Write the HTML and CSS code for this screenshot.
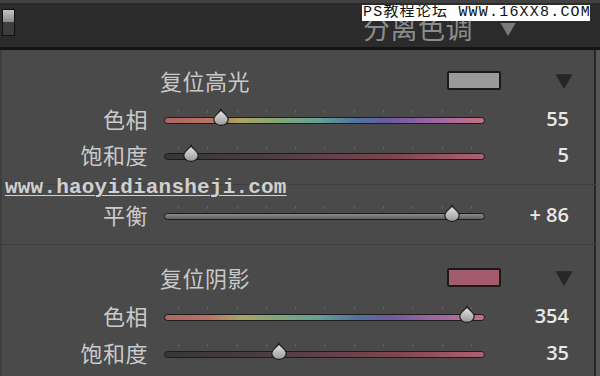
FILE: index.html
```html
<!DOCTYPE html>
<html lang="zh">
<head>
<meta charset="utf-8">
<link rel="stylesheet" href="styles.css">
</head>
<body>
<div class="frame">
  <header class="hdr">
    <div class="grip"><span class="grip-top"></span><span class="grip-bot"></span></div>
    <div class="hdr-fill"></div>
    <div class="hdr-title">分离色调</div>
    <div class="hdr-tri">▼</div>
    <div class="wm-box">PS教程论坛 WWW.16XX8.COM</div>
  </header>
  <main class="panel">
    <section class="sec sec-hi">
      <div class="sec-head">
        <span class="sec-name">复位高光</span>
        <span class="swatch swatch-hi"></span>
        <span class="sec-tri">▼</span>
      </div>
      <div class="row">
        <span class="lbl">色相</span>
        <div class="track-wrap">
          <div class="ticks"><i></i><i></i><i></i><i></i><i></i><i></i><i></i><i></i><i></i><i></i><i></i></div>
          <div class="track hue"></div>
          <svg class="thumb" style="left:17.8%" viewBox="0 0 18 18" width="18" height="18"><defs><linearGradient id="tg1" x1="0" y1="0" x2="0" y2="1"><stop offset="0" stop-color="#e8e8e8"/><stop offset="1" stop-color="#9a9a9a"/></linearGradient></defs><path d="M9 1.5 C10 4.5 16.2 7 16.2 11.5 A7.2 5.8 0 0 1 1.8 11.5 C1.8 7 8 4.5 9 1.5Z" fill="url(#tg1)" stroke="#1e1e1e" stroke-width="1.2"/></svg>
        </div>
        <span class="val">55</span>
      </div>
      <div class="row">
        <span class="lbl">饱和度</span>
        <div class="track-wrap">
          <div class="ticks"><i></i><i></i><i></i><i></i><i></i><i></i><i></i><i></i><i></i><i></i><i></i></div>
          <div class="track sat"></div>
          <svg class="thumb" style="left:8.4%" viewBox="0 0 18 18" width="18" height="18"><path d="M9 1.5 C10 4.5 16.2 7 16.2 11.5 A7.2 5.8 0 0 1 1.8 11.5 C1.8 7 8 4.5 9 1.5Z" fill="url(#tg1)" stroke="#1e1e1e" stroke-width="1.2"/></svg>
        </div>
        <span class="val">5</span>
      </div>
    </section>
    <section class="sec sec-bal">
      <div class="row">
        <span class="lbl">平衡</span>
        <div class="track-wrap">
          <div class="ticks"><i></i><i></i><i></i><i></i><i></i><i></i><i></i><i></i><i></i><i></i><i></i></div>
          <div class="track bal"></div>
          <svg class="thumb" style="left:89.7%" viewBox="0 0 18 18" width="18" height="18"><path d="M9 1.5 C10 4.5 16.2 7 16.2 11.5 A7.2 5.8 0 0 1 1.8 11.5 C1.8 7 8 4.5 9 1.5Z" fill="url(#tg1)" stroke="#1e1e1e" stroke-width="1.2"/></svg>
        </div>
        <span class="val">+ 86</span>
      </div>
    </section>
    <section class="sec sec-sh">
      <div class="sec-head">
        <span class="sec-name">复位阴影</span>
        <span class="swatch swatch-sh"></span>
        <span class="sec-tri">▼</span>
      </div>
      <div class="row">
        <span class="lbl">色相</span>
        <div class="track-wrap">
          <div class="ticks"><i></i><i></i><i></i><i></i><i></i><i></i><i></i><i></i><i></i><i></i><i></i></div>
          <div class="track hue"></div>
          <svg class="thumb" style="left:94.4%" viewBox="0 0 18 18" width="18" height="18"><path d="M9 1.5 C10 4.5 16.2 7 16.2 11.5 A7.2 5.8 0 0 1 1.8 11.5 C1.8 7 8 4.5 9 1.5Z" fill="url(#tg1)" stroke="#1e1e1e" stroke-width="1.2"/></svg>
        </div>
        <span class="val">354</span>
      </div>
      <div class="row">
        <span class="lbl">饱和度</span>
        <div class="track-wrap">
          <div class="ticks"><i></i><i></i><i></i><i></i><i></i><i></i><i></i><i></i><i></i><i></i><i></i></div>
          <div class="track sat"></div>
          <svg class="thumb" style="left:35.9%" viewBox="0 0 18 18" width="18" height="18"><path d="M9 1.5 C10 4.5 16.2 7 16.2 11.5 A7.2 5.8 0 0 1 1.8 11.5 C1.8 7 8 4.5 9 1.5Z" fill="url(#tg1)" stroke="#1e1e1e" stroke-width="1.2"/></svg>
        </div>
        <span class="val">35</span>
      </div>
    </section>
    <div class="wm-site">www.haoyidiansheji.com</div>
  </main>
</div>
</body>
</html>
```
FILE: styles.css
```css
* { box-sizing: border-box; }
html, body { margin: 0; padding: 0; }
body {
  width: 600px;
  height: 376px;
  overflow: hidden;
  background: #4a4a4a;
  font-family: "Noto Sans CJK SC", "Noto Sans", sans-serif;
}
.frame { width: 600px; height: 376px; display: flex; flex-direction: column; }

.hdr {
  position: relative;
  height: 50px;
  flex: none;
  background: #2b2b2b;
  border-top: 3px solid #414141;
  border-bottom: 3px solid #141414;
  display: flex;
  align-items: center;
  padding-left: 2px;
}
.grip {
  width: 13px;
  height: 27px;
  margin-top: -6px;
  border: 1px solid #111;
  display: flex;
  flex-direction: column;
}
.grip-top { flex: 1; background: linear-gradient(#c4c4c4, #8a8a8a); }
.grip-bot { flex: 1; background: #3e3e3e; }
.hdr-fill { flex: 1; }
.hdr-title {
  color: #8c8c8c;
  font-size: 27px;
  line-height: 30px;
  letter-spacing: 0.5px;
  margin-top: 6px;
}
.hdr-tri {
  color: #7a7a7a;
  font-size: 16px;
  margin: 6px 84px 0 27px;
}
.wm-box {
  position: absolute;
  left: 362px;
  top: 2px;
  width: 228px;
  height: 16px;
  background: #fff;
  color: #111;
  font-family: "Liberation Mono", "Noto Sans CJK SC", monospace;
  font-size: 15px;
  line-height: 16px;
  letter-spacing: 1.2px;
  padding-left: 1px;
  white-space: nowrap;
  overflow: hidden;
}

.panel {
  position: relative;
  flex: 1;
  background: #4a4a4a;
  border-left: 2px solid #3f3f3f;
  border-right: 4px solid #555;
  box-shadow: inset -2px 0 0 #262626;
}
.sec { display: flex; flex-direction: column; border-bottom: 1px solid #3f3f3f; }
.sec-hi { height: 135px; padding-top: 14px; }
.sec-bal { height: 60px; padding-top: 11px; }
.sec-sh { padding-top: 16px; border-bottom: none; }

.sec-head {
  height: 32px;
  display: flex;
  align-items: center;
  margin-bottom: 4px;
}
.sec-sh .sec-head { margin-bottom: 4px; }
.sec-name {
  margin-left: 158px;
  width: 287px;
  color: #c9c9c9;
  font-size: 22px;
  letter-spacing: 0.5px;
}
.swatch {
  width: 54px;
  height: 19px;
  border: 2px solid #1a1a1a;
  border-radius: 2px;
}
.swatch-hi { background: #9a9a9a; }
.swatch-sh { background: #a45c6c; }
.sec-tri {
  margin-left: 54px;
  color: #262626;
  font-size: 18px;
}

.row {
  height: 36px;
  display: flex;
  align-items: center;
}
.sec-sh .row:last-child { margin-top: 1px; }
.lbl {
  width: 146px;
  text-align: right;
  color: #cacaca;
  font-size: 22px;
  letter-spacing: 0.5px;
}
.track-wrap {
  position: relative;
  margin-left: 16px;
  width: 321px;
  height: 20px;
}
.ticks {
  position: absolute;
  left: 14px;
  right: 13px;
  top: 2px;
  height: 3px;
  display: flex;
  justify-content: space-between;
}
.ticks i { width: 1px; height: 3px; background: #626262; }
.track {
  position: absolute;
  left: 0;
  right: 0;
  top: 9px;
  height: 7px;
  border: 1px solid #1c1c1c;
  border-radius: 4px;
}
.hue {
  background: linear-gradient(90deg, #b06464 0%, #b87466 14%, #aaa462 24%, #80a676 36%, #64a098 48%, #5074a0 60%, #6a5aa0 70%, #9464a4 82%, #b46c98 92%, #c07080 100%);
}
.sat { background: linear-gradient(90deg, #363636 0%, #4e3e42 35%, #804452 72%, #b06070 100%); }
.bal { background: linear-gradient(#8a8a8a, #626262); border-color: #1a1a1a; }
.thumb {
  position: absolute;
  top: 0;
  margin-left: -9px;
}
.val {
  width: 84px;
  text-align: right;
  color: #e8e8e8;
  font-family: "Open Sans", "Noto Sans", sans-serif;
  font-size: 20px;
  font-weight: 600;
}

.wm-site {
  position: absolute;
  left: 3px;
  top: 126px;
  color: #d0d0d0;
  font-family: "Liberation Mono", monospace;
  font-weight: bold;
  font-size: 21px;
  line-height: 24px;
  text-decoration: underline;
  text-decoration-thickness: 1px;
  text-underline-offset: 2px;
  letter-spacing: 0.2px;
}
```
